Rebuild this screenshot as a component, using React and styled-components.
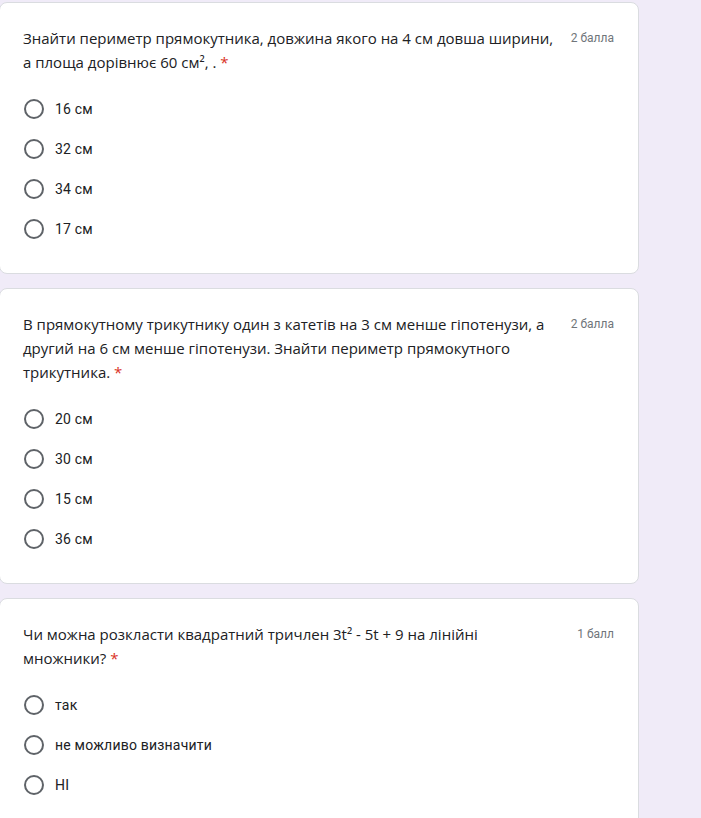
import React from 'react';
import styled, { createGlobalStyle } from 'styled-components';

const GlobalStyle = createGlobalStyle`
    html, body {
        margin: 0;
        padding: 0;
        background-color: #f0ebf8;
    }
`;

const Page = styled.main`
    display: flex;
    flex-direction: column;
    gap: 14px;
    width: 639px;
    padding-top: 2px;
    box-sizing: border-box;
`;

const Card = styled.section`
    background-color: #ffffff;
    border: 1px solid #dadce0;
    border-radius: 8px;
    padding: 23px 24px 24px 23px;
    margin-left: -1px;
`;

const Header = styled.div`
    display: flex;
    align-items: flex-start;
    justify-content: space-between;
    margin-bottom: 15px;
`;

const Title = styled.div`
    flex: 1;
    max-width: 536px;
    font-family: 'Open Sans', 'Noto Sans', sans-serif;
    font-size: 15px;
    line-height: 24px;
    color: #202124;
`;

const Required = styled.span`
    color: #d93025;
`;

const Points = styled.div`
    flex-shrink: 0;
    font-family: 'Roboto', Arial, sans-serif;
    font-size: 12px;
    line-height: 24px;
    color: #70757a;
    padding-left: 8px;
`;

const Options = styled.div`
    display: flex;
    flex-direction: column;
`;

const Option = styled.label`
    display: flex;
    align-items: center;
    height: 40px;
    font-family: 'Roboto', Arial, sans-serif;
    font-size: 14px;
    color: #202124;
    letter-spacing: 0.2px;
`;

const Radio = styled.span`
    width: 20px;
    height: 20px;
    box-sizing: border-box;
    border: 2px solid #5f6368;
    border-radius: 50%;
    margin-left: 1px;
    margin-right: 11px;
    flex-shrink: 0;
`;

const questions = [
    {
        title: 'Знайти периметр прямокутника, довжина якого на 4 см довша ширини, а площа дорівнює 60 см², .',
        points: '2 балла',
        options: ['16 см', '32 см', '34 см', '17 см'],
    },
    {
        title: 'В прямокутному трикутнику один з катетів на 3 см менше гіпотенузи, а другий на 6 см менше гіпотенузи. Знайти периметр прямокутного трикутника.',
        points: '2 балла',
        options: ['20 см', '30 см', '15 см', '36 см'],
    },
    {
        title: 'Чи можна розкласти квадратний тричлен 3t² - 5t + 9 на лінійні множники?',
        points: '1 балл',
        options: ['так', 'не можливо визначити', 'НІ'],
    },
];

const App = () => {
    return (
        <>
            <GlobalStyle />
            <Page>
                {questions.map((q, i) => (
                    <Card key={i}>
                        <Header>
                            <Title>
                                {q.title}{' '}
                                <Required>*</Required>
                            </Title>
                            <Points>{q.points}</Points>
                        </Header>
                        <Options>
                            {q.options.map(opt => (
                                <Option key={opt}>
                                    <Radio />
                                    {opt}
                                </Option>
                            ))}
                        </Options>
                    </Card>
                ))}
            </Page>
        </>
    );
};

export default App;
